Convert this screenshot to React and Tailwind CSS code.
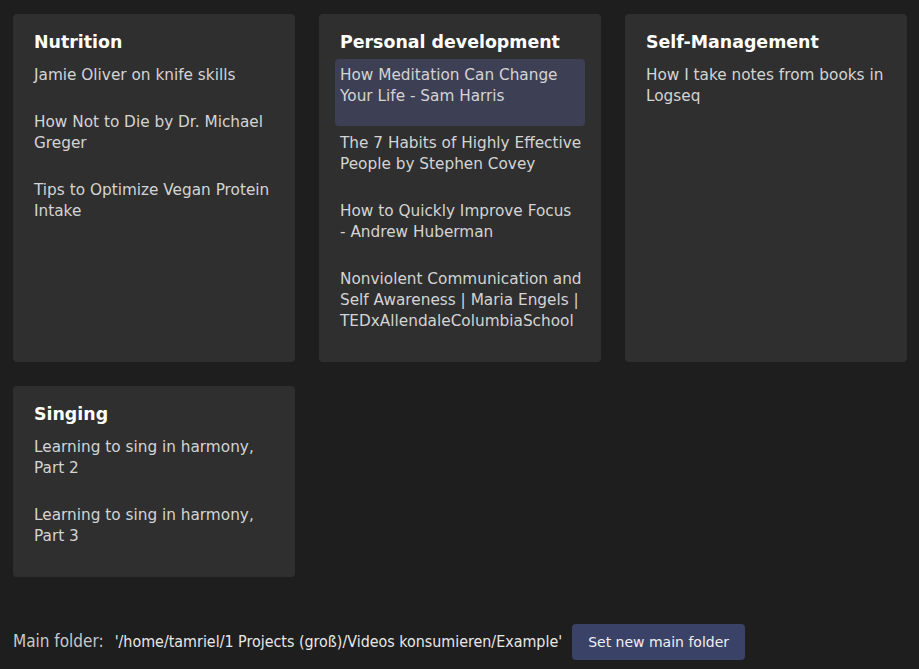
import React from 'react'

const groups = [
  {
    title: 'Nutrition',
    items: [
      'Jamie Oliver on knife skills',
      'How Not to Die by Dr. Michael Greger',
      'Tips to Optimize Vegan Protein Intake',
    ],
  },
  {
    title: 'Personal development',
    items: [
      'How Meditation Can Change Your Life - Sam Harris',
      'The 7 Habits of Highly Effective People by Stephen Covey',
      <>
        How to Quickly Improve Focus <span className="whitespace-nowrap">- Andrew</span> Huberman
      </>,
      'Nonviolent Communication and Self Awareness | Maria Engels | TEDxAllendaleColumbiaSchool',
    ],
    active: 0,
  },
  {
    title: 'Self-Management',
    items: ['How I take notes from books in Logseq'],
  },
  {
    title: 'Singing',
    items: ['Learning to sing in harmony, Part 2', 'Learning to sing in harmony, Part 3'],
  },
]

const Card = ({ title, items, active }) => (
  <div className="bg-[#2f2f2f] rounded-[4px] px-4 pt-[17px] pb-[11px]">
    <h2 className="pl-[5px] text-[17.4px] leading-[22px] font-bold text-white mb-[6px]">{title}</h2>
    <ul className="flex flex-col gap-[1px]">
      {items.map((item, i) => (
        <li
          key={i}
          className={
            i === active
              ? 'pl-[5px] pr-[2px] pt-[6px] pb-[19px] rounded-[4px] bg-[#3d4055] text-[#d4d4d4] text-[15.3px] leading-[21px]'
              : 'pl-[5px] pr-[2px] pt-[6px] pb-[19px] rounded-[4px] text-[#d4d4d4] text-[15.3px] leading-[21px]'
          }
        >
          {item}
        </li>
      ))}
    </ul>
  </div>
)

export default function App() {
  return (
    <div className="min-h-screen bg-[#1e1e1e] pl-[13px] pr-[12px] pt-[14px] pb-[9px] font-['DejaVu_Sans',sans-serif]">
      <div className="grid grid-cols-3 gap-6">
        {groups.map((g) => (
          <Card key={g.title} {...g} />
        ))}
      </div>

      {/* footer */}
      <div className="mt-[47px] flex items-center">
        <span className="font-['DejaVu_Sans_Condensed',sans-serif] text-[17px] text-[#c8c8c8]">Main folder:</span>
        <span className="ml-[11px] font-['DejaVu_Sans_Condensed',sans-serif] text-[15.9px] text-[#e8e8e8]">
          '/home/tamriel/1 Projects (groß)/Videos konsumieren/Example'
        </span>
        <button className="ml-[10px] h-9 px-4 rounded-[4px] bg-[#3b4267] text-[14px] text-[#f0f0f0]">
          Set new main folder
        </button>
      </div>
    </div>
  )
}
